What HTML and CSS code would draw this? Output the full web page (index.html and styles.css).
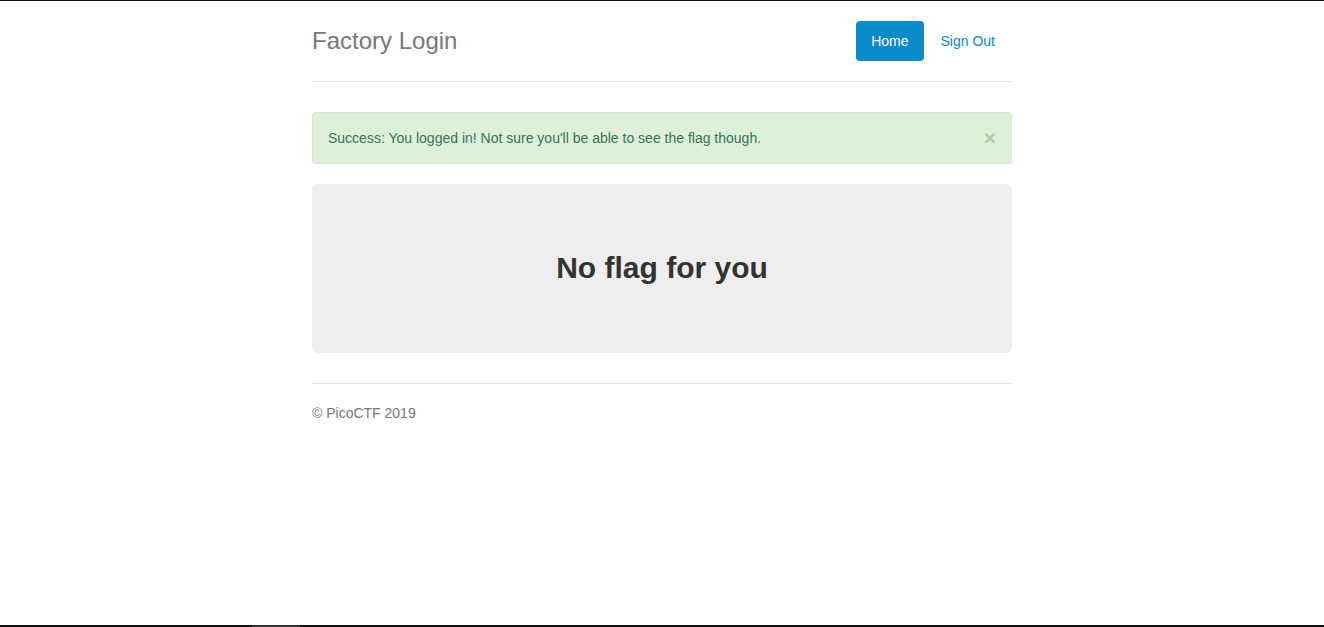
FILE: index.html
```html
<!DOCTYPE html>
<html lang="en">
<head>
<meta charset="utf-8">
<title>Factory Login</title>
<link rel="stylesheet" href="styles.css">
</head>
<body>
<div class="frame-top"></div>
<div class="container">
  <div class="header">
    <h3 class="brand">Factory Login</h3>
    <ul class="nav">
      <li><a class="pill active" href="#">Home</a></li>
      <li><a class="pill" href="#">Sign Out</a></li>
    </ul>
  </div>
  <div class="alert">
    <span>Success: You logged in! Not sure you'll be able to see the flag though.</span>
    <button class="close" type="button">×</button>
  </div>
  <div class="jumbotron">
    <h2>No flag for you</h2>
  </div>
  <footer class="footer">
    <p>© PicoCTF 2019</p>
  </footer>
</div>
<div class="frame-bottom"><span class="frame-seg"></span></div>
</body>
</html>
```

FILE: styles.css
```css
html, body {
  margin: 0;
  padding: 0;
  height: 100%;
}
body {
  font-family: "Liberation Sans", Arial, sans-serif;
  font-size: 14px;
  line-height: 20px;
  color: #333;
  background: #fff;
  display: flex;
  flex-direction: column;
}
.frame-top {
  height: 1px;
  background: #0f0f1c;
  flex: none;
}
.frame-bottom {
  margin-top: auto;
  height: 2px;
  background: #111;
  flex: none;
  display: flex;
}
.frame-seg {
  margin-left: 252px;
  width: 48px;
  background: #333;
}
.container {
  width: 700px;
  margin: 0 auto;
  padding-top: 20px;
  flex: none;
}
.header {
  display: flex;
  justify-content: space-between;
  align-items: flex-start;
  padding-bottom: 20px;
  border-bottom: 1px solid #e5e5e5;
  margin-bottom: 30px;
}
.brand {
  margin: 0;
  font-size: 24px;
  font-weight: normal;
  line-height: 40px;
  color: #777;
}
.nav {
  list-style: none;
  margin: 0 2px 0 0;
  padding: 0;
  display: flex;
  gap: 2px;
}
.pill {
  display: block;
  padding: 10px 15px;
  line-height: 20px;
  border-radius: 4px;
  color: #0a8ac9;
  text-decoration: none;
}
.pill.active {
  background: #0a8ac9;
  color: #fff;
}
.alert {
  display: flex;
  justify-content: space-between;
  align-items: center;
  padding: 15px;
  border: 1px solid #d6e9c6;
  border-radius: 4px;
  background: #dff0d8;
  color: #33745a;
  margin-bottom: 20px;
}
.close {
  border: 0;
  background: none;
  padding: 0;
  font-family: "Liberation Sans", Arial, sans-serif;
  font-size: 21px;
  font-weight: bold;
  line-height: 1;
  color: #2c5a2c;
  opacity: 0.25;
  margin-top: -2px;
  cursor: pointer;
}
.jumbotron {
  background: #eee;
  border-radius: 6px;
  padding: 47px 0 49px;
  text-align: center;
  margin-bottom: 30px;
}
.jumbotron h2 {
  margin: 0;
  font-size: 30px;
  font-weight: bold;
  line-height: 73px;
  color: #333;
}
.footer {
  border-top: 1px solid #e5e5e5;
  padding-top: 19px;
  color: #777;
}
.footer p {
  margin: 0;
}
```
